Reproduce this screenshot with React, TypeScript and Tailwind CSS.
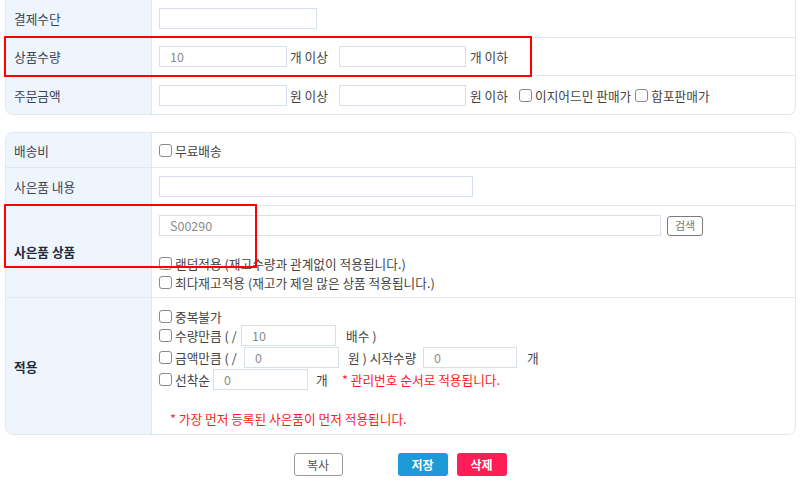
import React from "react";

const Cb = () => (
  <span className="inline-block w-[13px] h-[13px] border border-[#8a8a8a] rounded-[3px] bg-white shrink-0" />
);

const Inp = ({ w, v = "", cls = "" }: { w: string; v?: string; cls?: string }) => (
  <input
    readOnly
    defaultValue={v}
    className={`${w} h-[21px] border border-[#d6e0ea] bg-white pl-[10px] text-[12.5px] text-[#8c8c8c] outline-none shrink-0 ${cls}`}
  />
);

const Label = ({ children, bold = false }: { children: React.ReactNode; bold?: boolean }) => (
  <div
    className={`w-[146px] shrink-0 bg-[#eef5fd] border-r border-[#e2e8ef] pl-[8px] flex items-center whitespace-nowrap ${
      bold ? "font-bold text-[#1f2b3b]" : "text-[#3b4552]"
    }`}
  >
    {children}
  </div>
);

export default function App() {
  return (
    <div className="relative w-[800px] h-[489px] overflow-hidden bg-white font-['Noto_Sans_CJK_KR','Noto_Sans',sans-serif] text-[12.7px] text-[#444] leading-[17px] whitespace-nowrap">
      {/* Panel 1 */}
      <div className="ml-[5px] w-[791px] border border-t-0 border-[#e2e8ef] rounded-b-[8px] overflow-hidden">
        <div className="flex h-[38px] border-b border-[#e2e8ef]">
          <Label>결제수단</Label>
          <div className="flex-1 flex items-center pl-[7px]">
            <Inp w="w-[158px]" />
          </div>
        </div>
        <div className="flex h-[38px] border-b border-[#e2e8ef]">
          <Label>상품수량</Label>
          <div className="flex-1 flex items-center pl-[7px]">
            <Inp w="w-[128px]" v="10" />
            <span className="ml-[3px] w-[49px]">개 이상</span>
            <Inp w="w-[127px]" />
            <span className="ml-[4px]">개 이하</span>
          </div>
        </div>
        <div className="flex h-[38px]">
          <Label>주문금액</Label>
          <div className="flex-1 flex items-center pl-[7px]">
            <Inp w="w-[128px]" />
            <span className="ml-[3px] w-[49px]">원 이상</span>
            <Inp w="w-[127px]" />
            <span className="ml-[4px] w-[49px]">원 이하</span>
            <Cb />
            <span className="ml-[3px] mr-[4px]">이지어드민 판매가</span>
            <Cb />
            <span className="ml-[3px]">합포판매가</span>
          </div>
        </div>
      </div>

      {/* Panel 2 */}
      <div className="mt-[17px] ml-[5px] w-[791px] border border-[#e2e8ef] rounded-[8px] overflow-hidden">
        <div className="flex h-[35px] border-b border-[#e2e8ef]">
          <Label>배송비</Label>
          <div className="flex-1 flex items-center pl-[7px]">
            <Cb />
            <span className="ml-[3px]">무료배송</span>
          </div>
        </div>
        <div className="flex h-[38px] border-b border-[#e2e8ef]">
          <Label>사은품 내용</Label>
          <div className="flex-1 flex items-center pl-[7px]">
            <Inp w="w-[314px]" />
          </div>
        </div>
        <div className="flex h-[92px] border-b border-[#e2e8ef]">
          <Label bold>사은품 상품</Label>
          <div className="flex-1 flex flex-col pl-[7px] pt-[9px]">
            <div className="flex items-center">
              <Inp w="w-[502px]" v="S00290" />
              <button className="ml-[6px] w-[36px] h-[20px] border border-[#7a7a7a] rounded-[3px] bg-white text-[11px] text-[#777] leading-none">
                검색
              </button>
            </div>
            <div className="mt-[18px] flex items-center h-[19px]">
              <Cb />
              <span className="ml-[3px]">랜덤적용 (재고수량과 관계없이 적용됩니다.)</span>
            </div>
            <div className="flex items-center h-[19px]">
              <Cb />
              <span className="ml-[3px]">최다재고적용 (재고가 제일 많은 상품 적용됩니다.)</span>
            </div>
          </div>
        </div>
        <div className="flex h-[136px]">
          <Label bold>적용</Label>
          <div className="flex-1 flex flex-col pl-[7px] pt-[10px]">
            <div className="flex items-center h-[17px]">
              <Cb />
              <span className="ml-[3px]">중복불가</span>
            </div>
            <div className="flex items-center h-[21px]">
              <Cb />
              <span className="ml-[3px] w-[66px]">수량만큼 ( /</span>
              <Inp w="w-[95px]" v="10" />
              <span className="ml-[10px]">배수 )</span>
            </div>
            <div className="flex items-center h-[21px] mt-[1px]">
              <Cb />
              <span className="ml-[3px] w-[69px]">금액만큼 ( /</span>
              <Inp w="w-[95px]" v="0" />
              <span className="ml-[9px] w-[75px]">원 ) 시작수량</span>
              <Inp w="w-[94px]" v="0" />
              <span className="ml-[10px]">개</span>
            </div>
            <div className="flex items-center h-[21px] mt-[1px]">
              <Cb />
              <span className="ml-[3px] w-[38px]">선착순</span>
              <Inp w="w-[95px]" v="0" />
              <span className="ml-[8px] w-[26px]">개</span>
              <span className="text-[#ff1a1a]">* 관리번호 순서로 적용됩니다.</span>
            </div>
            <div className="mt-[19px] pl-[11px] h-[19px] flex items-center text-[#ff1a1a]">
              * 가장 먼저 등록된 사은품이 먼저 적용됩니다.
            </div>
          </div>
        </div>
      </div>

      {/* Buttons */}
      <div className="mt-[18px] flex justify-center">
        <button className="w-[49px] h-[23px] border border-[#9a9a9a] rounded-[3px] bg-white text-[12px] text-[#555] leading-none">
          복사
        </button>
        <button className="ml-[55px] w-[50px] h-[23px] rounded-[3px] bg-[#1e9ad6] text-[12px] font-bold text-white leading-none">
          저장
        </button>
        <button className="ml-[9px] w-[50px] h-[23px] rounded-[3px] bg-[#ff1e56] text-[12px] font-bold text-white leading-none">
          삭제
        </button>
      </div>

      {/* Red highlight boxes */}
      <div className="absolute left-[4px] top-[36px] w-[528px] h-[41px] border-2 border-[#ff0000] pointer-events-none" />
      <div className="absolute left-[4px] top-[204px] w-[253px] h-[64px] border-2 border-[#ff0000] pointer-events-none" />
    </div>
  );
}
